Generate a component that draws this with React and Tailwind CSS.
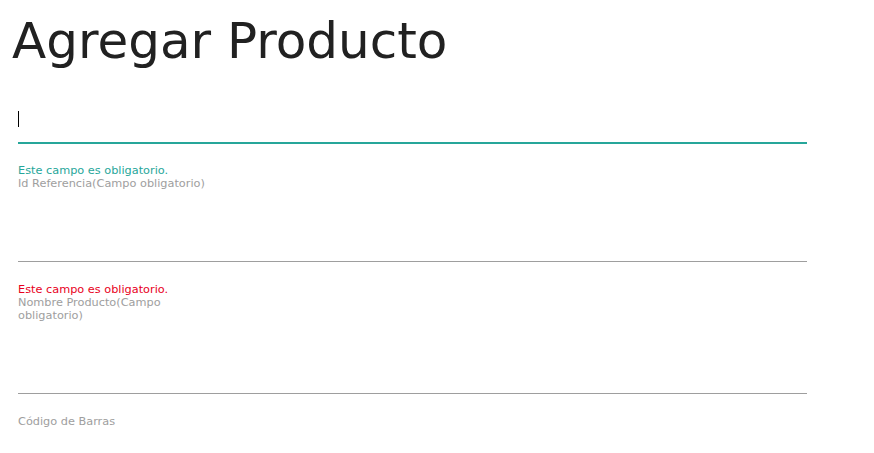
const fields = [
  { label: 'Id Referencia(Campo obligatorio)', error: 'Este campo es obligatorio.', errorColor: 'text-[#26a69a]', focused: true },
  { label: 'Nombre Producto(Campo obligatorio)', error: 'Este campo es obligatorio.', errorColor: 'text-[#e8001c]' },
  { label: 'Código de Barras' },
];

function Field({ label, error, errorColor, focused }) {
  return (
    <div className="mt-6">
      <div
        className={
          focused
            ? 'h-12 flex items-center border-b border-[#26a69a] shadow-[0_1px_0_0_#26a69a]'
            : 'h-12 flex items-center border-b border-[#9e9e9e]'
        }
      >
        {focused && <span className="block w-px h-4 bg-black" />}
      </div>
      <div className="pt-[21px] text-[11.3px] leading-[13px]">
        {error && <p className={errorColor}>{error}</p>}
        <p className="text-[#9e9e9e] max-w-[196px]">{label}</p>
      </div>
    </div>
  );
}

export default function App() {
  return (
    <div className="min-h-screen bg-white font-['DejaVu_Sans',Verdana,sans-serif]">
      <h1 className="pl-3 pt-3 pb-px text-[50px] leading-[58px] text-[#212121]">Agregar Producto</h1>
      <form className="pl-[18px] w-[807px]">
        {fields.map((f) => (
          <Field key={f.label} {...f} />
        ))}
      </form>
    </div>
  );
}
